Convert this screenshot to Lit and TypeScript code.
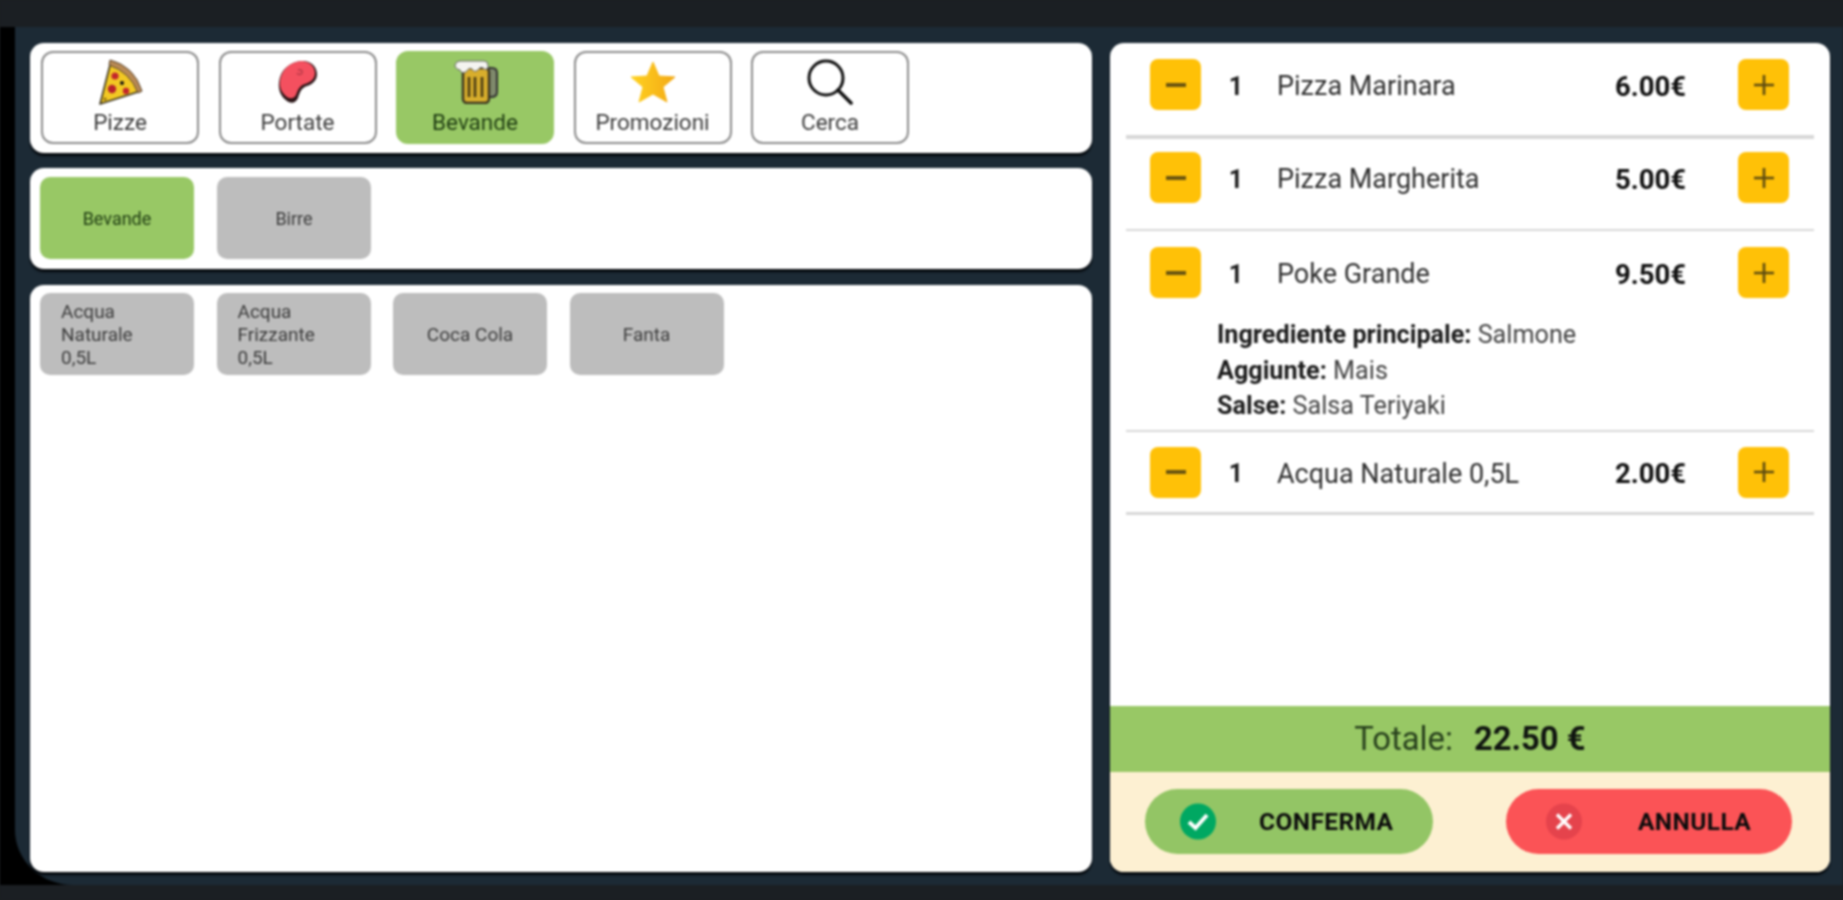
import { LitElement, html, css, svg } from "lit";
import { customElement } from "lit/decorators.js";

const pizza = html`<svg class="ico" width="46" height="48" viewBox="0 0 46 48">
  <path d="M3 46 L14 3 Q36 9 44 33 Z" fill="#f2c823" stroke="#3a3320" stroke-width="1.6" stroke-linejoin="round"/>
  <path d="M13 2 Q37 8 45 33 L41 35 Q33 14 12 7 Z" fill="#b98a55" stroke="#5a4630" stroke-width="1"/>
  <circle cx="18" cy="18" r="3.6" fill="#c3272b"/><circle cx="15" cy="31" r="4.2" fill="#b8232a"/>
  <circle cx="29" cy="33" r="3.2" fill="#c3272b"/><circle cx="25" cy="25" r="2" fill="#111"/>
  <circle cx="8" cy="41" r="1.6" fill="#8a6a10"/>
</svg>`;

const steak = html`<svg class="ico" width="40" height="44" viewBox="0 0 40 44">
  <path d="M23 1 C32 0 39 6 39 14 C39 20 35 24 29 26 C23 28 22 32 20 38 C18 43 13 44 9 41 C3 37 0 30 1 22 C2 10 12 2 23 1 Z" fill="#2a1416"/>
  <path d="M23 1 C31 1 37 6 37 13 C37 19 33 22 27 24 C21 26 20 30 18 35 C16 39 12 39 9 37 C4 33 1 28 2 21 C3 10 12 2 23 1 Z" fill="#f4505f"/>
  <path d="M20 10 C23 9 25 11 24 13 C23 15 20 15 19 13" fill="none" stroke="#b83a48" stroke-width="1.4"/>
</svg>`;

const beer = html`<svg class="ico" width="46" height="44" viewBox="0 0 46 44">
  <path d="M34 8 H40 Q45 8 45 13 V32 Q45 37 39 37 H34 Z" fill="#7f8a6c" stroke="#333" stroke-width="2"/>
  <rect x="11" y="8" width="26" height="35" rx="4" fill="#d8ae2c" stroke="#3b3420" stroke-width="2.4"/>
  <path d="M17 17 V37 M23 17 V37 M30 17 V37" stroke="#4a3c14" stroke-width="2.6"/>
  <path d="M3 5 Q4 1 8 1 H32 Q36 1 36 5 V8 Q33 11 31 8 Q28 6 26 10 Q22 13 20 9 Q17 7 14 12 Q9 14 8 10 Q3 9 3 5 Z" fill="#f4f4f0" stroke="#666" stroke-width="1"/>
</svg>`;

const star = html`<svg class="ico" width="46" height="42" viewBox="0 0 46 42">
  <defs><linearGradient id="st" x1="0" x2="1" y1="0" y2="0"><stop offset="0" stop-color="#ffd21f"/><stop offset="1" stop-color="#f3a916"/></linearGradient></defs>
  <path d="M23 1 L29 15 L45 16 L33 26 L37 41 L23 33 L9 41 L13 26 L1 16 L17 15 Z" fill="url(#st)" stroke="url(#st)" stroke-linejoin="round" stroke-width="1"/>
</svg>`;

const search = html`<svg class="ico" width="46" height="46" viewBox="0 0 46 46">
  <circle cx="19" cy="19" r="17" fill="none" stroke="#111" stroke-width="3"/>
  <path d="M31 31 L44 44" stroke="#111" stroke-width="3.6" stroke-linecap="round"/>
</svg>`;

const minus = svg`<path d="M1 10 H21" stroke="#6b5510" stroke-width="4"/>`;
const plus = svg`<path d="M1 10 H21 M11 0 V20" stroke="#5e4c10" stroke-width="2.6"/>`;

const tabs = [
  { label: "Pizze", icon: pizza, on: false },
  { label: "Portate", icon: steak, on: false },
  { label: "Bevande", icon: beer, on: true },
  { label: "Promozioni", icon: star, on: false },
  { label: "Cerca", icon: search, on: false },
];

const products = [["Acqua", "Naturale", "0,5L"], ["Acqua", "Frizzante", "0,5L"], ["Coca Cola"], ["Fanta"]];

const orders = [
  { name: "Pizza Marinara", price: "6.00€", top: 16, bottom: 25, line: 4, opts: [] as string[][] },
  { name: "Pizza Margherita", price: "5.00€", top: 13, bottom: 26, line: 2, opts: [] as string[][] },
  {
    name: "Poke Grande", price: "9.50€", top: 16, bottom: 6, line: 2,
    opts: [["Ingrediente principale:", "Salmone"], ["Aggiunte:", "Mais"], ["Salse:", "Salsa Teriyaki"]],
  },
  { name: "Acqua Naturale 0,5L", price: "2.00€", top: 15, bottom: 14, line: 3, opts: [] as string[][] },
];

@customElement("app-root")
export class AppRoot extends LitElement {
  static styles = css`
    :host { display: block; width: 1843px; height: 900px; overflow: hidden; background: #1b1f23;
      font-family: Roboto, "Liberation Sans", sans-serif; color: #222; }
    .screen { display: flex; flex-direction: column; height: 900px; filter: blur(0.8px); }
    .topbar { height: 27px; flex: none; background: #1b1f23; }
    .stage { flex: 1; display: flex; background: #000; min-height: 0; }
    .main { flex: 1; display: flex; gap: 18px; margin-left: 15px; padding: 16px 13px 13px 15px; background: #1c2a35;
      border-bottom-left-radius: 58px 55px; min-width: 0; }
    .bottombar { height: 15px; flex: none; background: #1b1f23; }
    .left { width: 1062px; flex: none; display: flex; flex-direction: column; gap: 15px; }
    .card { background: #fff; border-radius: 14px; box-shadow: 0 3px 2px #05090d; display: flex; align-items: flex-start; }
    .tabs { height: 110px; padding: 8px 11px; gap: 19.5px; box-sizing: border-box; }
    .tab { width: 158px; height: 93px; box-sizing: border-box; border: 2px solid #8c8c8c; border-radius: 12px;
      display: flex; flex-direction: column; align-items: center; justify-content: space-between; padding: 5px 0 7px;
      font-size: 22.5px; line-height: 26px; color: #3c3c3c; }
    .tab.on { background: #98c865; border-color: #98c865; color: #1f3d12; }
    .tab .wrap { height: 48px; display: flex; align-items: center; }
    .subs { height: 101px; padding: 9px 10px; gap: 23px; box-sizing: border-box; font-size: 18px; }
    .prods { flex: 1; margin-top: 1px; padding: 8px 10px; gap: 22.5px; box-sizing: border-box; font-size: 19px; }
    .tile { width: 154px; height: 82px; border-radius: 10px; background: #bdbdbd; box-sizing: border-box; padding: 0 21px;
      display: flex; align-items: center; justify-content: center; line-height: 23px; color: #3c3c3c; }
    .tile.on { background: #98c865; color: #1f3d12; }
    .tile .multi { width: 100%; }
    .right { flex: 1; background: #fff; border-radius: 14px; box-shadow: 0 3px 2px #05090d; overflow: hidden;
      display: flex; flex-direction: column; min-width: 0; }
    .list { flex: 1; padding: 0 16px; }
    .item { border-bottom: 2px solid #d8d8d8; }
    .line { display: flex; align-items: center; padding: 0 25px 0 24px; }
    .qbtn { width: 51px; height: 51px; flex: none; background: #ffc107; border-radius: 8px; display: flex;
      align-items: center; justify-content: center; }
    .qty { width: 70px; margin-right: 6px; padding-top: 3px; text-align: center; font-size: 25px; font-weight: 700; color: #1c1c1c; flex: none; }
    .name { flex: 1; font-size: 27px; color: #303030; padding-top: 3px; }
    .price { font-size: 27.5px; font-weight: 700; color: #111; margin-right: 52px; padding-top: 3px; }
    .opts { margin: 19px 0 0 91px; font-size: 25.2px; line-height: 35.5px; color: #444; }
    .opts b { font-weight: 700; color: #1c1c1c; }
    .total { height: 66px; flex: none; background: #98c865; display: flex; align-items: center; justify-content: center;
      gap: 21px; font-size: 32.8px; color: #27401c; }
    .total b { color: #101510; font-weight: 700; }
    .actions { height: 100px; flex: none; background: #fdf0d2; display: flex; align-items: center; justify-content: space-between;
      padding: 0 38px 2px 35px; box-sizing: border-box; }
    .pill { height: 65px; border-radius: 33px; display: flex; align-items: center; box-sizing: border-box;
      font-size: 24.5px; letter-spacing: 0.4px; font-weight: 700; color: #0c0c0c; }
    .pill.ok { width: 288px; background: #93c565; padding-left: 35px; gap: 43px; }
    .pill.no { width: 286px; background: #fb5356; padding-left: 40px; gap: 56px; }
  `;

  private row(o: (typeof orders)[number]) {
    return html`<div class="item" style="padding: ${o.top}px 0 ${o.bottom}px; border-bottom-width: ${o.line}px">
      <div class="line">
        <div class="qbtn"><svg width="22" height="20" viewBox="0 0 22 20">${minus}</svg></div>
        <div class="qty">1</div>
        <div class="name">${o.name}</div>
        <div class="price">${o.price}</div>
        <div class="qbtn"><svg width="22" height="20" viewBox="0 0 22 20">${plus}</svg></div>
      </div>
      ${o.opts.length
        ? html`<div class="opts">${o.opts.map((p) => html`<div><b>${p[0]}</b> ${p[1]}</div>`)}</div>`
        : ""}
    </div>`;
  }

  render() {
    return html`<div class="screen">
      <div class="topbar"></div>
      <div class="stage"><div class="main">
        <div class="left">
          <div class="card tabs">
            ${tabs.map((t) => html`<div class="tab ${t.on ? "on" : ""}"><div class="wrap">${t.icon}</div><div>${t.label}</div></div>`)}
          </div>
          <div class="card subs">
            <div class="tile on">Bevande</div>
            <div class="tile">Birre</div>
          </div>
          <div class="card prods">
            ${products.map((p) => html`<div class="tile"><div class=${p.length > 1 ? "multi" : ""}>${p.map((l) => html`<div>${l}</div>`)}</div></div>`)}
          </div>
        </div>
        <div class="right">
          <div class="list">${orders.map((o) => this.row(o))}</div>
          <div class="total"><span>Totale:</span><b>22.50 €</b></div>
          <div class="actions">
            <div class="pill ok">
              <svg width="36" height="37" viewBox="0 0 36 37"><circle cx="18" cy="18.5" r="18" fill="#00a862"/><path d="M9 19 L15.5 25 L27 12" fill="none" stroke="#fff" stroke-width="4"/></svg>
              <span>CONFERMA</span>
            </div>
            <div class="pill no">
              <svg width="36" height="37" viewBox="0 0 36 37"><circle cx="18" cy="18.5" r="18" fill="#e5434c"/><path d="M11 11.5 L25 25.5 M25 11.5 L11 25.5" stroke="#fff" stroke-width="3.4"/></svg>
              <span>ANNULLA</span>
            </div>
          </div>
        </div>
      </div></div>
      <div class="bottombar"></div>
    </div>`;
  }
}
